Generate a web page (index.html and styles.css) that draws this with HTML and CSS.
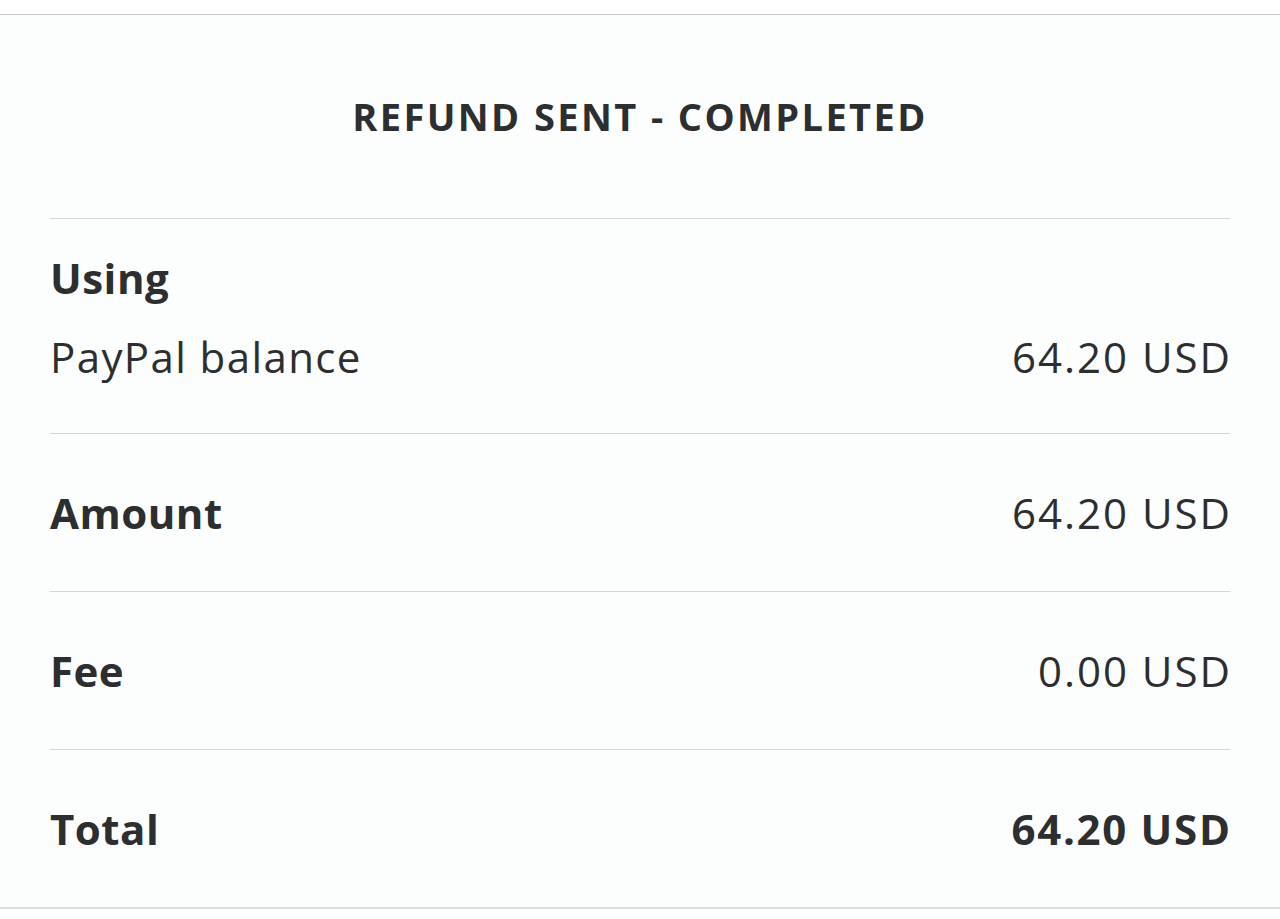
FILE: index.html
```html
<!DOCTYPE html>
<html lang="en">
<head>
    <meta charset="UTF-8"/>
    <meta name="viewport" content="width=device-width, initial-scale=1.0"/>
    <title>Refund sent</title>
    <link rel="stylesheet" href="styles.css">
</head>
<body>
<div class="sheet">
    <h1 class="status">REFUND SENT - COMPLETED</h1>
    <div class="details">
        <div class="row row-using">
            <div class="label">Using</div>
            <div class="line">
                <span class="source">PayPal balance</span>
                <span class="value">64.20 USD</span>
            </div>
        </div>
        <div class="row">
            <span class="label">Amount</span>
            <span class="value">64.20 USD</span>
        </div>
        <div class="row">
            <span class="label">Fee</span>
            <span class="value">0.00 USD</span>
        </div>
        <div class="row row-total">
            <span class="label">Total</span>
            <span class="value">64.20 USD</span>
        </div>
    </div>
</div>
</body>
</html>
```

FILE: styles.css
```css
* {
    margin: 0;
    padding: 0;
    box-sizing: border-box;
}

body {
    background: #fff;
    color: #2c2e2f;
    font-family: "Open Sans", "Noto Sans", sans-serif;
    padding-top: 14px;
}

.sheet {
    background: #fcfdfd;
    border-top: 1px solid #c6c8c8;
    border-bottom: 2px solid #dcdfe0;
}

.status {
    height: 203px;
    display: flex;
    align-items: center;
    justify-content: center;
    font-size: 38px;
    font-weight: 700;
    letter-spacing: 2.4px;
    padding-bottom: 2px;
}

.details {
    padding: 0 50px;
}

.row {
    height: 158px;
    border-top: 1px solid #d0d7da;
    display: flex;
    align-items: center;
    justify-content: space-between;
    font-size: 42px;
}

.row-using {
    height: 215px;
    display: block;
    padding-top: 30px;
}

.row-using .line {
    display: flex;
    justify-content: space-between;
    margin-top: 22px;
}

.label {
    font-weight: 700;
    letter-spacing: 0.5px;
}

.source {
    letter-spacing: 1.4px;
}

.value {
    font-weight: 400;
    letter-spacing: 2px;
    margin-right: -2px;
}

.row-total .value {
    font-weight: 700;
    letter-spacing: 1.7px;
    margin-right: -1.7px;
}
```
